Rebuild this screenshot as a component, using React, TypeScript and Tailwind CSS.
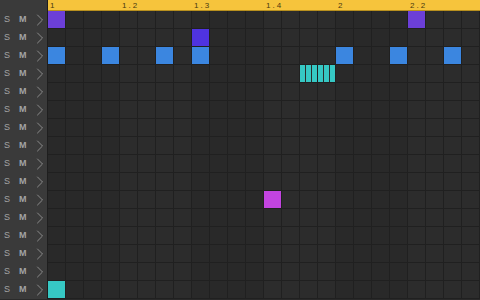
import { ChevronRight } from "lucide-react";

const COLS = 24;
const ROWS = 16;

type Note = { row: number; col: number; color: string; kind?: "roll" };

const notes: Note[] = [
  { row: 0, col: 0, color: "bg-[#6c3fd8]" },
  { row: 0, col: 20, color: "bg-[#6c3fd8]" },
  { row: 1, col: 8, color: "bg-[#4f33e0]" },
  { row: 2, col: 0, color: "bg-[#3b86e0]" },
  { row: 2, col: 3, color: "bg-[#3b86e0]" },
  { row: 2, col: 6, color: "bg-[#3b86e0]" },
  { row: 2, col: 8, color: "bg-[#3b86e0]" },
  { row: 2, col: 16, color: "bg-[#3b86e0]" },
  { row: 2, col: 19, color: "bg-[#3b86e0]" },
  { row: 2, col: 22, color: "bg-[#3b86e0]" },
  { row: 3, col: 14, color: "bg-[#36c8c4]", kind: "roll" },
  { row: 3, col: 15, color: "bg-[#36c8c4]", kind: "roll" },
  { row: 10, col: 12, color: "bg-[#c344e0]" },
  { row: 15, col: 0, color: "bg-[#36c8c4]" },
];

const markers = ["1", "1.2", "1.3", "1.4", "2", "2.2"];

function Cell({ row, col }: { row: number; col: number }) {
  const note = notes.find((n) => n.row === row && n.col === col);
  const shade = Math.floor(col / 4) % 2 === 0 ? "bg-[#292929]" : "bg-[#2c2c2c]";
  return (
    <div className={`w-[18px] h-[18px] shrink-0 border-r border-b border-[#202020] ${shade} flex`}>
      {note && note.kind === "roll" && (
        <div className="flex flex-1 gap-px">
          <div className={`flex-1 ${note.color}`} />
          <div className={`flex-1 ${note.color}`} />
          <div className={`flex-1 ${note.color}`} />
        </div>
      )}
      {note && !note.kind && <div className={`flex-1 ${note.color}`} />}
    </div>
  );
}

export default function App() {
  return (
    <div
      className="w-[480px] h-[300px] overflow-hidden bg-[#2a2a2a] flex flex-col"
      style={{ fontFamily: '"Liberation Sans", Arial, sans-serif' }}
    >
      <div className="flex h-[11px]">
        <div className="w-[48px] shrink-0 bg-[#3a3a3a] border-r border-[#1e1e1e]" />
        <div className="flex flex-1 bg-[#f6c43c] border-b border-[#b8901e]">
          {markers.map((m) => (
            <div
              key={m}
              className="w-[72px] text-[8px] leading-[10px] pt-px text-[#4a3a10] pl-[2px] tracking-[2px]"
            >
              {m}
            </div>
          ))}
        </div>
      </div>

      {Array.from({ length: ROWS }).map((_, r) => (
        <div key={r} className="flex h-[18px]">
          <div className="w-[48px] shrink-0 overflow-hidden bg-[#3a3a3a] border-r border-[#1e1e1e] flex items-center text-[9px] text-[#a4a4a4]">
            <span className="w-[19px] shrink-0 pl-[4px]">S</span>
            <span className="w-[11px] shrink-0 font-semibold">M</span>
            <ChevronRight className="w-[20px] h-[20px] shrink-0 text-[#9a9a9a]" strokeWidth={1} />
          </div>
          {Array.from({ length: COLS }).map((_, c) => (
            <Cell key={c} row={r} col={c} />
          ))}
        </div>
      ))}
    </div>
  );
}
